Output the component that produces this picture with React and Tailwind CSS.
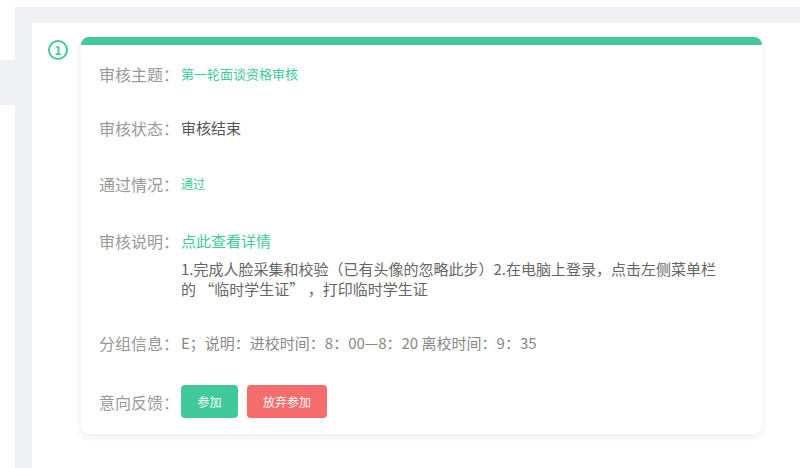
import React from 'react';

const font = { fontFamily: '"Noto Sans CJK SC", "Microsoft YaHei", sans-serif' };

const Row = ({ label, children, className = '' }) => (
    <div className={`flex items-center h-6 ${className}`}>
        <span className="w-[82px] shrink-0 text-[16px] text-[#999999]">{label}</span>
        {children}
    </div>
);

const App = () => {
    return (
        <div className="w-full h-[468px] flex bg-white overflow-hidden" style={font}>
            {/* sidebar edge */}
            <div className="w-[15px] shrink-0">
                <div className="mt-[60px] h-[45px] bg-[#f0f1f5]" />
            </div>

            <div className="flex-1 pt-[7px] flex flex-col">
                <div className="flex-1 bg-[#f0f1f5] pt-4 pl-[17px] flex flex-col">
                    {/* main panel */}
                    <div className="flex-1 bg-white flex pl-4 pt-[14px] pr-[38px]">
                        <div className="mt-[3px] w-5 h-5 shrink-0 rounded-full border-2 border-[#42c99b] text-[#42c99b] text-[12px] font-semibold leading-none flex items-center justify-center">
                            1
                        </div>

                        <div className="ml-[13px] flex-1 self-start rounded-lg border-t-[8px] border-[#42c99b] bg-white shadow-[0_2px_10px_rgba(0,0,0,0.08)] pl-[18px] pt-[17px] pb-4">
                            <Row label="审核主题：">
                                <span className="text-[13px] text-[#42c99b]">第一轮面谈资格审核</span>
                            </Row>

                            <Row label="审核状态：" className="mt-[30px]">
                                <span className="text-[15px] text-[#555555]">审核结束</span>
                            </Row>

                            <Row label="通过情况：" className="mt-8">
                                <span className="text-[12px] text-[#42c99b]">通过</span>
                            </Row>

                            <Row label="审核说明：" className="mt-[33px]">
                                <span className="text-[15px] text-[#42c99b] cursor-pointer">点此查看详情</span>
                            </Row>

                            <p className="mt-[6px] ml-[82px] text-[15px] leading-5 text-[#666666]">
                                1.完成人脸采集和校验（已有头像的忽略此步）2.在电脑上登录，点击左侧菜单栏
                                <br />
                                的 “临时学生证” ，打印临时学生证
                            </p>

                            <Row label="分组信息：" className="mt-8">
                                <span className="text-[15px] text-[#888888]">E；说明：进校时间：8：00—8：20 离校时间：9：35</span>
                            </Row>

                            <div className="mt-[30px] flex items-center">
                                <span className="w-[82px] shrink-0 text-[16px] text-[#999999]">意向反馈：</span>
                                <button className="h-[33px] w-[57px] rounded bg-[#42c99b] text-white text-[12px]">参加</button>
                                <button className="ml-[9px] h-[33px] w-[80px] rounded bg-[#f56c6c] text-white text-[12px]">放弃参加</button>
                            </div>
                        </div>
                    </div>
                </div>
            </div>
        </div>
    );
};

export default App;
